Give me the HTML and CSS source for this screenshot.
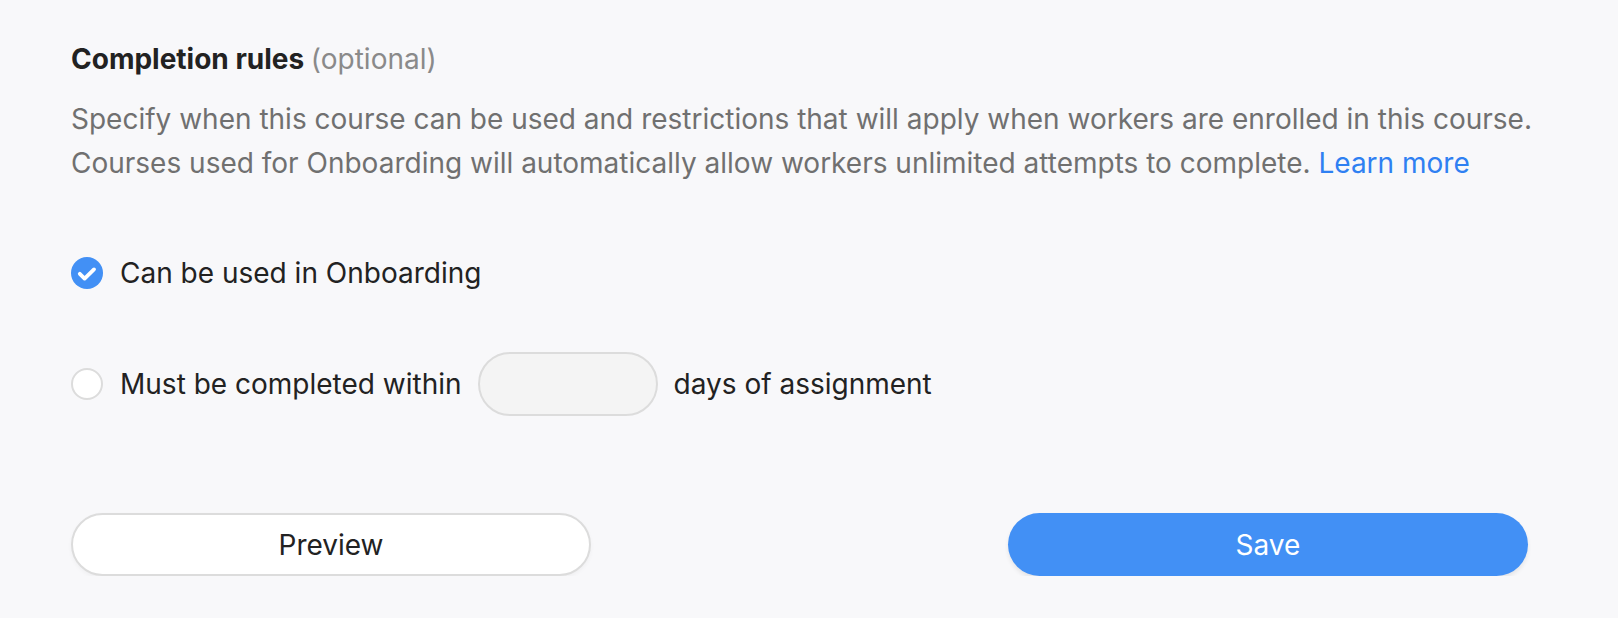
FILE: index.html
```html
<!DOCTYPE html>
<html lang="en">
	<head>
		<meta charset="UTF-8" />
		<meta name="viewport" content="width=device-width, initial-scale=1.0" />
		<title>Completion rules</title>
		<link rel="stylesheet" href="styles.css">
	</head>
	<body>
		<div class="panel">
			<h2 class="title">Completion rules <span class="optional">(optional)</span></h2>
			<p class="description">
				Specify when this course can be used and restrictions that will apply when workers are enrolled in this course.<br>
				Courses used for Onboarding will automatically allow workers unlimited attempts to complete. <a href="#" class="link">Learn more</a>
			</p>

			<label class="option option-check">
				<span class="check checked">
					<svg width="32" height="32" viewBox="0 0 32 32">
						<circle cx="16" cy="16" r="16" fill="#4290f5" />
						<path d="M8.8 16.8 L13.6 21.6 L23 12.4" fill="none" stroke="#fff" stroke-width="3.8" stroke-linecap="round" stroke-linejoin="round" />
					</svg>
				</span>
				<span class="option-text">Can be used in Onboarding</span>
			</label>

			<label class="option option-days">
				<span class="check"></span>
				<span class="option-text">Must be completed within</span>
				<input type="text" class="days-input" />
				<span class="option-text">days of assignment</span>
			</label>

			<div class="actions">
				<button class="btn btn-secondary">Preview</button>
				<button class="btn btn-primary">Save</button>
			</div>
		</div>
	</body>
</html>
```

FILE: styles.css
```css
body {
	margin: 0;
	font-family: Inter, "Noto Sans", sans-serif;
	background-color: #f8f8fa;
	color: #222;
}
.panel {
	width: 1457px;
	padding: 42px 0 0 71px;
}
.title {
	margin: 0;
	font-size: 28px;
	line-height: 34px;
	font-weight: 700;
	color: #222;
}
.optional {
	font-weight: 400;
	color: #8a8a8a;
}
.description {
	margin: 21px 0 0;
	font-size: 28px;
	line-height: 44px;
	color: #707070;
	white-space: nowrap;
}
.link {
	color: #2f80f2;
	text-decoration: none;
}
.option {
	display: flex;
	align-items: center;
	gap: 17px;
	font-size: 28px;
	line-height: 32px;
	color: #222;
}
.option-check {
	margin-top: 72px;
}
.option-days {
	margin-top: 63px;
	gap: 16px;
}
.check {
	width: 32px;
	height: 32px;
	flex: none;
	box-sizing: border-box;
	border-radius: 50%;
	border: 2px solid #dcdcdc;
	background-color: #fff;
}
.check.checked {
	border: none;
	background: none;
}
.check svg {
	display: block;
}
.option-days .check {
	margin-right: 1px;
}
.days-input {
	width: 180px;
	height: 64px;
	box-sizing: border-box;
	border: 2px solid #dcdcdc;
	border-radius: 32px;
	background-color: #f4f4f4;
	padding: 0 20px;
	font: inherit;
	outline: none;
}
.actions {
	display: flex;
	justify-content: space-between;
	margin-top: 97px;
}
.btn {
	width: 520px;
	height: 63px;
	border-radius: 32px;
	font-family: Inter, "Noto Sans", sans-serif;
	font-size: 28px;
	cursor: pointer;
}
.btn-secondary {
	background-color: #fff;
	border: 2px solid #dcdcdc;
	color: #222;
	box-shadow: 0 2px 4px rgba(0, 0, 0, 0.04);
}
.btn-primary {
	background-color: #4290f5;
	border: none;
	color: #fff;
	box-shadow: 0 3px 4px rgba(0, 0, 0, 0.08);
}
```
